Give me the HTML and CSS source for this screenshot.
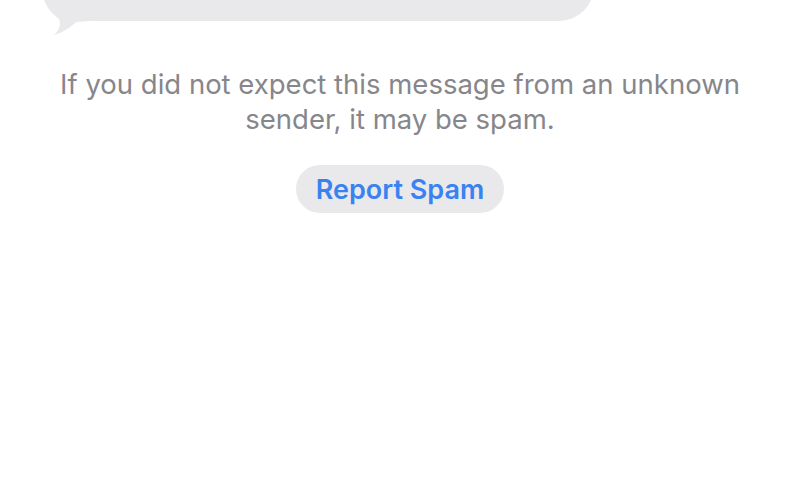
FILE: index.html
```html
<!DOCTYPE html>
<html lang="en">
<head>
<meta charset="utf-8">
<title>Unknown sender</title>
<link rel="stylesheet" href="styles.css">
</head>
<body>
<main class="thread">
  <div class="bubble">
    <svg class="tail" width="50" height="46" viewBox="0 0 50 46" aria-hidden="true">
      <path d="M2 0 C3 14 11 23 19 29 C22 36 17 42 14 45 C22 43 30 38 36 32 L50 31 L50 0 Z" fill="#e9e9eb"/>
    </svg>
  </div>
  <p class="notice">If you did not expect this message from an unknown sender, it may be spam.</p>
  <button class="report" type="button">Report Spam</button>
</main>
</body>
</html>
```
FILE: styles.css
```css
html, body {
  margin: 0;
  padding: 0;
  background: #ffffff;
}

.thread {
  display: flex;
  flex-direction: column;
  align-items: center;
  font-family: Inter, "Noto Sans", sans-serif;
}

.bubble {
  position: relative;
  align-self: flex-start;
  margin-left: 42px;
  margin-top: -49px;
  width: 552px;
  height: 70px;
  background: #e9e9eb;
  border-radius: 36px;
}

.tail {
  position: absolute;
  left: -2px;
  bottom: -15px;
}

.notice {
  margin: 46px 0 0;
  width: 720px;
  text-align: center;
  font-size: 27.5px;
  line-height: 35px;
  color: #86868b;
}

.report {
  margin-top: 28px;
  height: 48px;
  padding: 0 20px;
  border: none;
  border-radius: 24px;
  background: #e9e9eb;
  color: #3a82f0;
  font-family: Inter, "Noto Sans", sans-serif;
  font-size: 27px;
  font-weight: 600;
  cursor: pointer;
}
```
